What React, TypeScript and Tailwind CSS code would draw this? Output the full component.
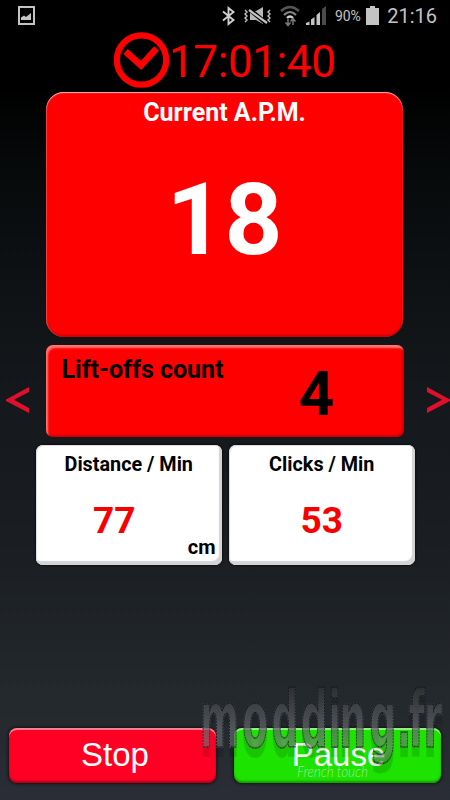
import type { ReactNode } from "react";
import { clsx } from "clsx";

const WATERMARK = "modding.fr";
// left edge of every watermark letter, in the squeezed coordinate space
const WATERMARK_X = [-4, 84, 145, 206, 263, 286, 349, 406, 430, 462].join(" ");

function StatusBar() {
  return (
    <div className="flex h-8 items-center bg-black pr-[13px] pl-[18px] text-[#c4c4c4]">
      <svg className="-mt-px h-[19px] w-[17px]" viewBox="0 0 17 19" fill="none">
        <rect x="1" y="1" width="15" height="17" stroke="#c4c4c4" strokeWidth="2" />
        <path d="M3 14V11.5L6 9.5L8 11L13 7V14Z" fill="#c4c4c4" />
      </svg>

      <svg
        className="-mt-px ml-[187px] h-[20px] w-[13px]"
        viewBox="0 0 13 20"
        fill="none"
        stroke="#d0d0d0"
        strokeWidth="1.9"
      >
        <path d="M1 5.5L11.500 14L6.500 18V2L11.500 6L1 14.5" />
      </svg>

      {/* muted speaker between two vibration waves */}
      <svg className="-mt-px ml-2 h-[20px] w-[30px]" viewBox="0 0 30 20" fill="none" stroke="#c4c4c4">
        <path
          d="M2 4L4 6L2 8L4 10L2 12L4 14L2 16M27 4L25 6L27 8L25 10L27 12L25 14L27 16"
          strokeWidth="1.4"
        />
        <path d="M7 5H13L20 1V18L13 14H7Z" fill="#b8b8b8" stroke="none" />
        <path d="M6 3L24 18" stroke="#000" strokeWidth="4.500" />
        <path d="M6 4L24 17" strokeWidth="2.2" />
      </svg>

      <svg className="ml-[7px] h-[22px] w-[20px]" viewBox="0 0 20 22" fill="none">
        <path d="M1 6Q10 -2 19 6" stroke="#555" strokeWidth="2.4" />
        <path d="M4 10Q10 4 16 10" stroke="#858585" strokeWidth="2.2" />
        <path d="M7 13Q10 10 13 13" stroke="#d0d0d0" strokeWidth="2.4" />
        <path
          d="M8 14V20M5.500 17.500L8 20.500L10.500 17.500M13 20V14M10.500 16.500L13 13.500L15.500 16.500"
          stroke="#777"
          strokeWidth="1.500"
        />
      </svg>

      <svg className="-mt-px ml-[6px] h-[20px] w-[21px]" viewBox="0 0 21 20" fill="#c4c4c4">
        <path d="M0 19V17L3.500 15.500V19ZM5 19V13.500L8.500 11V19ZM10.500 19V9L14 6V19Z" />
        <path d="M16 19V3L20 0V19Z" fill="#4a4a4a" />
      </svg>

      <span className="ml-[8px] w-[28px] text-[14px] tracking-[-0.1px]">90%</span>
      <svg className="-mt-px ml-[3px] h-[19px] w-[13px]" viewBox="0 0 13 19" fill="#c4c4c4">
        <path d="M4 0H9V2H13V19H0V2H4Z" />
      </svg>
      <span className="ml-auto text-[20px] leading-none">21:16</span>
    </div>
  );
}

function SessionClock() {
  return (
    <div className="flex h-[60px] pl-[113px] text-[#ff0000]">
      <svg className="h-[56px] w-[57px]" viewBox="0 0 57 56" fill="none" stroke="currentColor">
        <circle cx="28.500" cy="28" r="24.700" strokeWidth="6.200" />
        <path d="M12.500 19.500L28 33.500L43.500 16.500" strokeWidth="6.500" />
      </svg>
      <span className="mt-[4px] ml-[-1px] text-[44px] leading-[52px] tracking-[-0.4px]">
        17:01:40
      </span>
    </div>
  );
}

function Arrow({ flip = false }: { flip?: boolean }) {
  return (
    <svg
      className={clsx("mt-[18px] h-[26px] w-[23px] shrink-0", flip && "-scale-x-100")}
      viewBox="0 0 23 26"
      fill="#e0102c"
    >
      <path d="M0 12.500L23 0V5L8 12.800L23 21V26L0 14Z" />
    </svg>
  );
}

function StatCard({ title, value, unit }: { title: string; value: string; unit?: string }) {
  return (
    <div className="relative h-[120px] w-[185.500px] rounded-[7px] bg-white text-center font-bold shadow-[inset_-3px_-4px_1px_#d4d4d4,inset_1px_1px_1px_#ddd,0_0_3px_#000]">
      <div className="pt-[8px] text-[19.800px] leading-[24px] text-black">{title}</div>
      <div
        className={clsx(
          "mt-[22px] text-[37px] leading-[44px] text-[#f80000]",
          unit && "pr-[29px]",
        )}
      >
        {value}
      </div>
      {unit && (
        <span className="absolute right-[6px] bottom-[6px] text-[20px] leading-[24px] text-black">
          {unit}
        </span>
      )}
    </div>
  );
}

function ActionButton({ className, children }: { className: string; children: ReactNode }) {
  return (
    <button
      className={clsx(
        "h-[55px] w-[207px] rounded-[8px] pb-[2px] font-['Liberation_Sans',sans-serif] text-[33px] leading-none text-white",
        "shadow-[inset_0_2px_0_rgba(255,255,255,0.5),inset_0_-2px_2px_rgba(0,0,0,0.3),0_0_3px_1px_#111]",
        className,
      )}
    >
      {children}
    </button>
  );
}

function Watermark() {
  return (
    <svg
      className="pointer-events-none absolute top-[680px] left-[190px] h-[120px] w-[260px]"
      viewBox="0 0 260 120"
    >
      <defs>
        <linearGradient id="metal" gradientUnits="userSpaceOnUse" x1="0" y1="-60" x2="0" y2="20">
          <stop offset="0" stopColor="#303336" />
          <stop offset="0.500" stopColor="#65696d" />
          <stop offset="0.750" stopColor="#797e81" stopOpacity="0.750" />
          <stop offset="1" stopColor="#55595b" stopOpacity="0.600" />
        </linearGradient>
      </defs>
      <g
        transform="translate(12 67) scale(0.480 1)"
        fontFamily="DejaVu Sans, sans-serif"
        fontWeight="700"
        fontSize="78"
      >
        <text x={WATERMARK_X} y="9" fill="#000" stroke="#000" strokeWidth="2" opacity="0.120">
          {WATERMARK}
        </text>
        {/* metal face with a thin dotted rim */}
        <g opacity="0.700">
          <text x={WATERMARK_X} y="0" fill="url(#metal)" stroke="url(#metal)" strokeWidth="2">
            {WATERMARK}
          </text>
          <text
            x={WATERMARK_X}
            y="0"
            fill="none"
            stroke="#0c0e10"
            strokeWidth="1.600"
            strokeDasharray="2 1"
          >
            {WATERMARK}
          </text>
        </g>
      </g>
      <text
        x="107"
        y="97"
        fill="#d5e8d5"
        fillOpacity="0.750"
        fontFamily="Lato, sans-serif"
        fontWeight="300"
        fontStyle="italic"
        fontSize="16"
        textLength="71"
        lengthAdjust="spacingAndGlyphs"
      >
        French touch
      </text>
    </svg>
  );
}

export default function App() {
  return (
    <main className="relative flex h-[800px] w-[450px] flex-col overflow-hidden bg-[linear-gradient(#000_0%,#000_11%,#080b0c_23%,#121518_42%,#1b1f24_70%,#24292d_88%,#2a2d36_100%)] font-[Roboto,sans-serif]">
      <StatusBar />
      <SessionClock />

      <section className="ml-[46px] h-[245px] w-[357px] rounded-[18px] bg-[#ff0000] text-center font-bold text-white shadow-[inset_0_1px_1px_rgba(255,255,255,0.7),inset_1px_0_1px_rgba(255,255,255,0.2),inset_0_-2px_2px_rgba(0,0,0,0.2)]">
        <h1 className="pt-[6px] text-[25px] leading-[30px]">Current A.P.M.</h1>
        <p className="mt-[32px] text-[101px] leading-[120px]">18</p>
      </section>

      <div className="mt-[8px] flex items-center justify-between pl-[6px]">
        <Arrow />
        <section className="ml-[-7px] flex h-[92px] w-[358px] rounded-[7px] bg-[#ff0000] pl-[16px] font-bold text-black shadow-[inset_2px_3px_2px_rgba(255,255,255,0.45),inset_-2px_-2px_2px_rgba(0,0,0,0.2)]">
          <h2 className="w-[208px] pt-[10px] text-[25px] leading-[30px]">Lift-offs count</h2>
          <p className="w-[94px] pt-[12px] text-center text-[62px] leading-[74px]">4</p>
        </section>
        <Arrow flip />
      </div>

      <div className="mt-[8px] flex gap-[7.500px] pl-[36px]">
        <StatCard title="Distance / Min" value="77" unit="cm" />
        <StatCard title="Clicks / Min" value="53" />
      </div>

      <div className="mt-auto mb-[17px] flex justify-between px-[9px]">
        <ActionButton className="bg-[#ff0024] pl-[5px]">Stop</ActionButton>
        <ActionButton className="bg-[#1ce300] pl-[2px]">Pause</ActionButton>
      </div>

      <Watermark />
    </main>
  );
}
